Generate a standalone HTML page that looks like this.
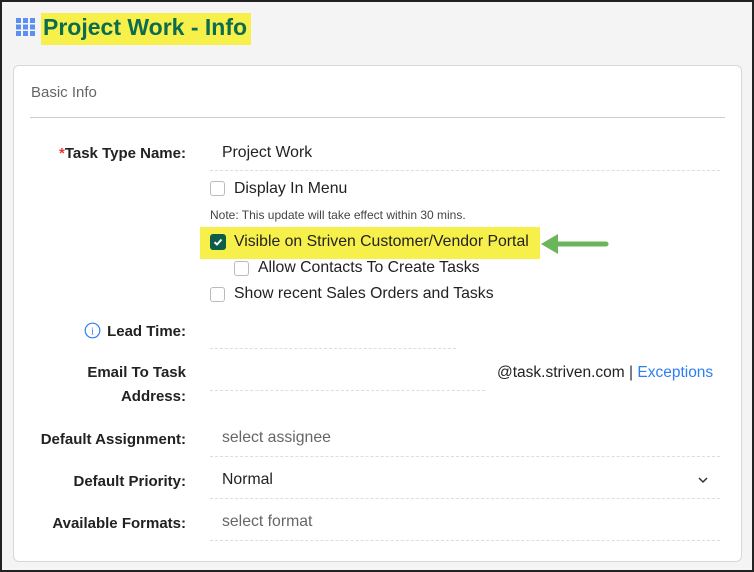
<!DOCTYPE html>
<html><head><style>
*{margin:0;padding:0;box-sizing:border-box}
body{width:754px;height:572px;background:#f4f4f4;font-family:"Liberation Sans",sans-serif;position:relative;overflow:hidden;color:#222}
.frame{position:absolute;left:0;top:0;width:754px;height:572px;border:2px solid #222;z-index:10;pointer-events:none}
.a{position:absolute;white-space:nowrap}
.card{position:absolute;left:13px;top:65px;width:729px;height:497px;background:#fff;border:1px solid #d8d8d8;border-radius:6px}
.lbl{position:absolute;right:568px;font-weight:bold;font-size:15px;text-align:right;color:#222}
.ul{position:absolute;border-top:1px dashed #ddd;height:0}
.cb{position:absolute;width:15px;height:15px;border:1px solid #bbb;border-radius:3px;background:#fff}
.t{font-size:15.8px;color:#222}
</style></head><body>
<div class="frame"></div>
<svg class="a" style="left:16px;top:18px" width="19" height="18" viewBox="0 0 19 18">
<g fill="#5b8ff0"><rect x="0" y="0" width="5" height="5"/><rect x="7" y="0" width="5" height="5"/><rect x="14" y="0" width="5" height="5"/><rect x="0" y="6.5" width="5" height="5"/><rect x="7" y="6.5" width="5" height="5"/><rect x="14" y="6.5" width="5" height="5"/><rect x="0" y="13" width="5" height="5"/><rect x="7" y="13" width="5" height="5"/><rect x="14" y="13" width="5" height="5"/></g></svg>
<div class="a" style="left:41px;top:13px;width:210px;height:32px;background:#f7f04a"></div>
<div class="a" style="left:43px;top:14px;font-size:23px;font-weight:bold;color:#0d6b4f">Project Work - Info</div>
<div class="card"></div>
<div class="a" style="left:31px;top:84px;font-size:15px;color:#666">Basic Info</div>
<div class="a" style="left:30px;top:117px;width:695px;height:1px;background:#ccc"></div>

<div class="lbl" style="top:145px"><span style="color:#e33">*</span>Task Type Name:</div>
<div class="a t" style="left:222px;top:144px">Project Work</div>
<div class="ul" style="left:210px;top:170px;width:510px"></div>

<div class="cb" style="left:210px;top:181px"></div>
<div class="a t" style="left:234px;top:180px">Display In Menu</div>
<div class="a" style="left:210px;top:208px;font-size:12px;color:#444">Note: This update will take effect within 30 mins.</div>
<div class="a" style="left:200px;top:227px;width:340px;height:32px;background:#f7f04a"></div>
<div class="a" style="left:210px;top:234px;width:16px;height:16px;background:#0d5e48;border-radius:3px"></div>
<svg class="a" style="left:210px;top:234px" width="16" height="16"><path d="M4.5 8.2 L7 10.5 L11.5 5.5" stroke="#fff" stroke-width="2" fill="none"/></svg>
<div class="a t" style="left:234px;top:233px">Visible on Striven Customer/Vendor Portal</div>
<svg class="a" style="left:538px;top:232px" width="74" height="24"><path d="M12 12 H68" stroke="#6bb55a" stroke-width="5" stroke-linecap="round"/><path d="M3 12 L20 2 L20 22 Z" fill="#6bb55a"/></svg>
<div class="cb" style="left:234px;top:261px"></div>
<div class="a t" style="left:258px;top:259px">Allow Contacts To Create Tasks</div>
<div class="cb" style="left:210px;top:287px"></div>
<div class="a t" style="left:234px;top:285px">Show recent Sales Orders and Tasks</div>

<svg class="a" style="left:84px;top:322px" width="17" height="17"><circle cx="8.5" cy="8.5" r="7.3" stroke="#2d7ff0" stroke-width="1.2" fill="none"/><text x="8.5" y="12.5" font-size="10" text-anchor="middle" fill="#2d7ff0" font-family="Liberation Serif">i</text></svg>
<div class="lbl" style="top:323px">Lead Time:</div>
<div class="ul" style="left:210px;top:348px;width:246px"></div>

<div class="lbl" style="line-height:24px;top:361px">Email To Task<br>Address:</div>
<div class="ul" style="left:210px;top:390px;width:275px"></div>
<div class="a" style="left:497px;top:364px;font-size:15.5px">@task.striven.com <span style="color:#333">|</span> <span style="color:#2d7ff0">Exceptions</span></div>

<div class="lbl" style="top:431px">Default Assignment:</div>
<div class="a t" style="left:222px;top:429px;color:#666">select assignee</div>
<div class="ul" style="left:210px;top:456px;width:510px"></div>

<div class="lbl" style="top:473px">Default Priority:</div>
<div class="a t" style="left:222px;top:471px">Normal</div>
<svg class="a" style="left:697px;top:475px" width="12" height="10"><path d="M2 3 L6 7 L10 3" stroke="#333" stroke-width="1.5" fill="none"/></svg>
<div class="ul" style="left:210px;top:498px;width:510px"></div>

<div class="lbl" style="top:515px">Available Formats:</div>
<div class="a t" style="left:222px;top:513px;color:#666">select format</div>
<div class="ul" style="left:210px;top:540px;width:510px"></div>
</body></html>
